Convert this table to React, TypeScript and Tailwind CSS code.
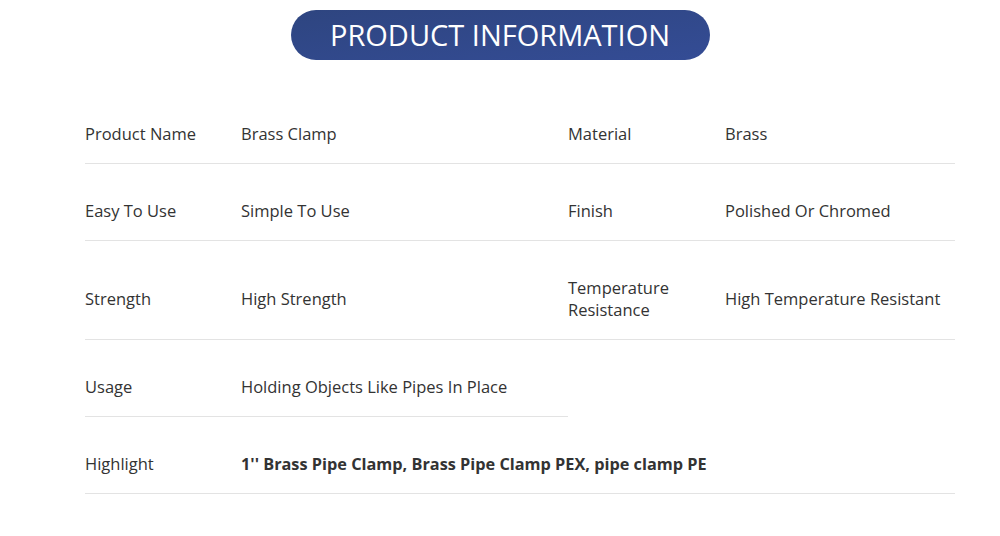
const rows: { label: string; value: string; label2?: string; value2?: string }[] = [
  { label: 'Product Name', value: 'Brass Clamp', label2: 'Material', value2: 'Brass' },
  { label: 'Easy To Use', value: 'Simple To Use', label2: 'Finish', value2: 'Polished Or Chromed' },
  { label: 'Strength', value: 'High Strength', label2: 'Temperature Resistance', value2: 'High Temperature Resistant' },
  { label: 'Usage', value: 'Holding Objects Like Pipes In Place' },
];

const cell = 'flex items-center border-b border-[#e3e3e3] pt-[36px] pb-[18px]';

export default function App() {
  return (
    <div className="min-h-[536px] w-[1000px] bg-white font-['Open_Sans',sans-serif] text-[16.5px] leading-[22px] text-[#333]">
      {/* Heading */}
      <div className="flex justify-center pt-[10px]">
        <div className="flex h-[50px] w-[419px] items-center justify-center rounded-full bg-gradient-to-br from-[#2e4580] to-[#344c95]">
          <h2 className="text-[29px] font-medium text-white">PRODUCT INFORMATION</h2>
        </div>
      </div>

      {/* Spec table */}
      <div className="ml-[85px] mt-[27px] grid w-[870px] grid-cols-[156px_327px_157px_230px]">
        {rows.map((r) => (
          <div key={r.label} className="contents">
            <div className={cell}>{r.label}</div>
            <div className={cell}>{r.value}</div>
            {r.label2 ? (
              <>
                <div className={cell}>
                  <span className="w-[110px]">{r.label2}</span>
                </div>
                <div className={cell}>{r.value2}</div>
              </>
            ) : (
              <>
                <div />
                <div />
              </>
            )}
          </div>
        ))}
        <div className={cell}>Highlight</div>
        <div className={cell + ' col-span-3 text-[16.3px] font-bold'}>1'' Brass Pipe Clamp, Brass Pipe Clamp PEX, pipe clamp PE</div>
      </div>
    </div>
  );
}
